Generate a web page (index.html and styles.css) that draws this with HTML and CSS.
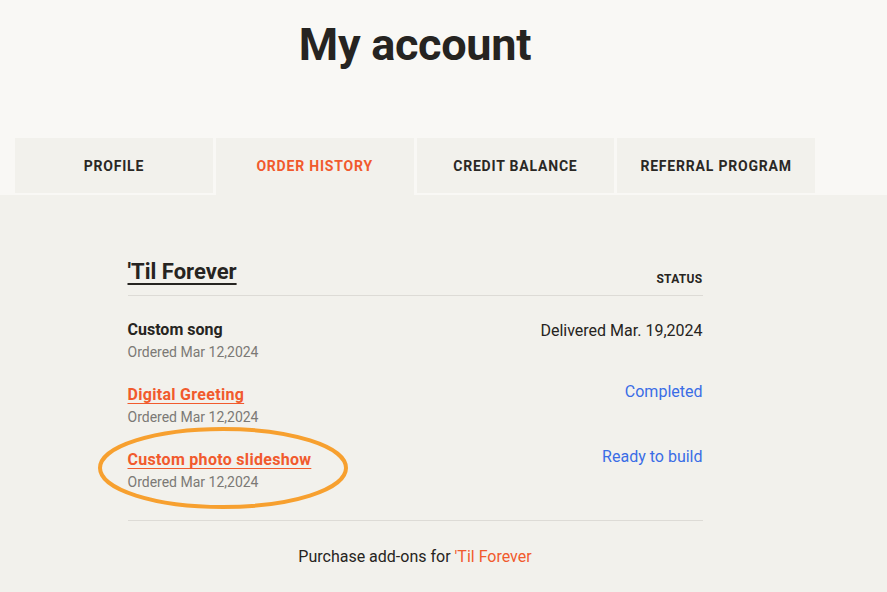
FILE: index.html
```html
<!DOCTYPE html>
<html lang="en">
<head>
    <meta charset="UTF-8">
    <meta name="viewport" content="width=device-width, initial-scale=1.0">
    <title>My account</title>
    <link rel="stylesheet" href="styles.css">
</head>
<body>

    <header class="top">
        <div class="wrap">
            <h1>My account</h1>
            <nav class="tabs">
                <a class="tab" href="#">Profile</a>
                <a class="tab active" href="#">Order history</a>
                <a class="tab" href="#">Credit balance</a>
                <a class="tab" href="#">Referral program</a>
            </nav>
        </div>
    </header>

    <main class="wrap">
        <section class="orders">
            <div class="orders-head">
                <a class="song-title" href="#">'Til Forever</a>
                <span class="status-label">Status</span>
            </div>

            <ul class="order-list">
                <li class="order">
                    <div>
                        <div class="item-name">Custom song</div>
                        <div class="item-date">Ordered Mar 12,2024</div>
                    </div>
                    <div class="item-status">Delivered Mar. 19,2024</div>
                </li>
                <li class="order">
                    <div>
                        <a class="item-name link" href="#">Digital Greeting</a>
                        <div class="item-date">Ordered Mar 12,2024</div>
                    </div>
                    <a class="item-status blue" href="#">Completed</a>
                </li>
                <li class="order">
                    <div class="circled">
                        <a class="item-name link" href="#">Custom photo slideshow</a>
                        <div class="item-date">Ordered Mar 12,2024</div>
                        <svg class="ring" width="256" height="88" viewBox="0 0 256 88">
                            <ellipse cx="128" cy="44" rx="123" ry="39" fill="none" stroke="#f7a02f" stroke-width="4"/>
                        </svg>
                    </div>
                    <a class="item-status blue" href="#">Ready to build</a>
                </li>
            </ul>

            <p class="addons">Purchase add-ons for <a href="#">'Til Forever</a></p>
        </section>
    </main>

</body>
</html>
```

FILE: styles.css
```css
body {
    margin: 0;
    font-family: Roboto, "Noto Sans", sans-serif;
    color: #262421;
    background-color: #f2f1ec;
}

a {
    text-decoration: none;
}

.wrap {
    width: 800px;
    margin-left: 15px;
}

.top {
    background-color: #f9f8f5;
    padding-top: 17px;
}

h1 {
    margin: 0 0 65px;
    text-align: center;
    font-size: 45px;
    line-height: 56px;
    font-weight: 700;
    letter-spacing: -0.3px;
}

.tabs {
    display: flex;
    gap: 3px;
    align-items: flex-start;
    height: 57px;
}

.tab {
    flex: 1;
    height: 55px;
    display: flex;
    align-items: center;
    justify-content: center;
    background-color: #f2f1ec;
    color: #2a2825;
    font-size: 14px;
    font-weight: 700;
    letter-spacing: 0.8px;
    text-transform: uppercase;
}

.tab.active {
    height: 57px;
    padding-bottom: 2px;
    box-sizing: border-box;
    color: #f15a2d;
}

.orders {
    width: 575px;
    margin: 0 auto;
    padding-top: 63px;
}

.orders-head {
    display: flex;
    justify-content: space-between;
    align-items: flex-end;
    padding-bottom: 9px;
    border-bottom: 1px solid #dddbd6;
}

.song-title {
    color: #262421;
    font-size: 22px;
    line-height: 28px;
    font-weight: 700;
    text-decoration: underline;
    text-underline-offset: 4px;
    text-decoration-thickness: 2px;
}

.status-label {
    font-size: 12px;
    font-weight: 700;
    letter-spacing: 0.3px;
    text-transform: uppercase;
    line-height: 14px;
}

.order-list {
    list-style: none;
    margin: 0;
    padding: 24px 0 28px;
    border-bottom: 1px solid #dddbd6;
    display: flex;
    flex-direction: column;
    gap: 23px;
}

.order {
    display: flex;
    justify-content: space-between;
    align-items: flex-start;
}

.item-name {
    display: block;
    font-size: 16px;
    line-height: 20px;
    font-weight: 700;
    color: #262421;
}

.item-name.link {
    color: #f15a2d;
    letter-spacing: 0.3px;
    text-decoration: underline;
    text-underline-offset: 3px;
}

.item-date {
    margin-top: 2px;
    font-size: 14px;
    line-height: 20px;
    color: #7b7975;
}

.item-status {
    margin-top: 1px;
    font-size: 16px;
    line-height: 20px;
    color: #262421;
}

.item-status.blue {
    color: #3a6de6;
    margin-top: -3px;
}

.circled {
    position: relative;
}

.ring {
    position: absolute;
    left: -33px;
    top: -26px;
}

.addons {
    margin: 24px 0 0;
    text-align: center;
    font-size: 16px;
    line-height: 24px;
}

.addons a {
    color: #f15a2d;
}
```
